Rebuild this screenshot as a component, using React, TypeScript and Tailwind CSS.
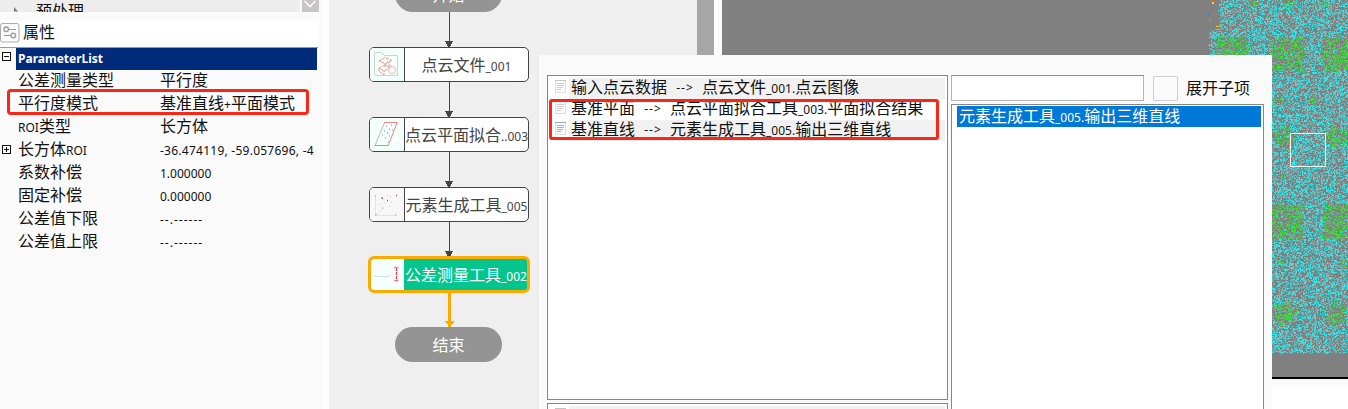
import React from "react";

/** Sets ideographs at the inherited size and every other run in a smaller Latin face. */
function Mixed({ text }: { text: string }) {
  const parts = text.split(/([\x20-\x7e]+)/);
  return (
    <>
      {parts.map((p, i) =>
        i % 2 === 1 ? (
          <span key={i} className="text-[12px]">
            {p}
          </span>
        ) : (
          p
        ),
      )}
    </>
  );
}

const properties = [
  { name: "公差测量类型", value: "平行度" },
  { name: "平行度模式", value: "基准直线+平面模式" },
  { name: "ROI类型", value: "长方体" },
  { name: "长方体ROI", value: "-36.474119, -59.057696, -4", group: true, spacing: "tracking-[0.25px]" },
  { name: "系数补偿", value: "1.000000" },
  { name: "固定补偿", value: "0.000000" },
  { name: "公差值下限", value: "--.------", spacing: "tracking-[1px]" },
  { name: "公差值上限", value: "--.------", spacing: "tracking-[1px]" },
];

function Toggle({ plus = false }: { plus?: boolean }) {
  return (
    <svg width="9" height="9" viewBox="0 0 9 9" shapeRendering="crispEdges" className="block">
      <rect x="0.5" y="0.5" width="8" height="8" fill="#fff" stroke="#111" />
      <path d={plus ? "M2 4.5h5M4.5 2v5" : "M2 4.5h5"} stroke="#111" />
    </svg>
  );
}

function PropertyPanel() {
  return (
    <div className="relative flex h-full w-[322px] shrink-0 flex-col bg-[#fafafa]">
      <div className="flex h-[12px] w-[319px] shrink-0 overflow-hidden">
        <div className="flex w-[300px] bg-[#ededed]">
          <svg width="36" height="12" className="block shrink-0">
            <path d="M14 7l4 4.500h-4z" fill="#777" />
          </svg>
          <span className="mt-[2px] leading-[18px]">预处理</span>
        </div>
        <div className="ml-[2px] w-[17px] bg-[#c8c5c6]">
          <svg width="17" height="12" className="block">
            <path d="M2.500 1l5.500 5.500L13.500 1" fill="none" stroke="#fff" strokeWidth="1.600" />
          </svg>
        </div>
      </div>
      <div className="mt-[8px] flex h-[27px] w-[319px] shrink-0 items-center bg-white">
        <svg width="20" height="20" viewBox="0 0 20 20" className="mt-[-1px] block" fill="none" stroke="#999">
          <rect x="0.500" y="0.500" width="18.500" height="18.500" rx="2" fill="#fbfbfb" stroke="#aaa" />
          <circle cx="6.200" cy="6.300" r="2.300" strokeWidth="1.300" />
          <circle cx="13.300" cy="12.500" r="2.300" strokeWidth="1.300" />
          <path d="M9 6.500h7M4 12.500h7" strokeWidth="1.200" />
        </svg>
        <span className="ml-[3px] mt-[-3px]">属性</span>
      </div>
      <div className="h-px w-[318px] shrink-0 bg-[#999]" />
      <div className="flex h-[22px] shrink-0">
        <div className="w-[16px] pl-[2px] pt-[4px]">
          <Toggle />
        </div>
        <div className="flex w-[301px] items-center bg-[#002a7a] pb-px pl-[2px] text-[12px] font-bold text-white">
          ParameterList
        </div>
      </div>
      {properties.map((p) => (
        <div key={p.name} className="flex h-[23px] shrink-0 items-start">
          <div className="w-[18px] pl-[2px] pt-[6px]">{p.group && <Toggle plus />}</div>
          <div className="h-[23px] w-[142px] whitespace-nowrap leading-[21px]">
            <Mixed text={p.name} />
          </div>
          <div className={p.spacing ? `h-[23px] w-[158px] whitespace-nowrap leading-[21px] ${p.spacing}` : "h-[23px] w-[158px] whitespace-nowrap leading-[21px]"}>
            <Mixed text={p.value} />
          </div>
        </div>
      ))}
      <div className="absolute left-[7px] top-[89px] h-[26px] w-[302px] rounded-[4px] border-[3px] border-[#fb2616]" />
    </div>
  );
}

function Arrow({ active = false }: { active?: boolean }) {
  return (
    <svg width="160" height="35" viewBox="0 0 160 35" className="block shrink-0" shapeRendering="crispEdges">
      {active ? (
        <>
          <rect x="79" y="0" width="3" height="35" fill="#fbab00" />
          <path d="M76 29h9v1l-3 3v1h-3v-1l-3-3z" fill="#fbab00" />
        </>
      ) : (
        <>
          <rect x="80" y="0" width="1" height="35" fill="#444" />
          <path d="M76 29h8v1h-1v2h-1v2h-1v1h-2v-1h-1v-2h-1v-2h-1z" fill="#444" />
        </>
      )}
    </svg>
  );
}

function FolderIcon() {
  return (
    <svg width="34" height="33" viewBox="0 0 34 33" fill="none">
      <path d="M4.500 26V4.500h7l3 3h13V27.500H5.500z" stroke="#ccd2d0" />
      <path d="M9 13l6-3.500 7 3-6 3.500zM15 16v3M9 20l6-3 5 2-6 4zM9 20v3l5 4v-4M17 13l4 6" stroke="#f08d8d" strokeDasharray="3 1" />
      <circle cx="22" cy="22" r="3.500" stroke="#f6b3b3" />
    </svg>
  );
}

function PlaneIcon() {
  return (
    <svg width="34" height="33" viewBox="0 0 34 33" fill="none">
      <path d="M14.500 4.500L5 27.500" stroke="#b9b9b9" />
      <path d="M14 4.500h13.500M18.500 27.500h-14M27 5l-8.500 22" stroke="#ef8181" />
      <path d="M16 8h1M21 7h1M14 13h1M19 11h1M17 15h1M12 17h1M15 20h1M19 18h1M22 12h1M18 24h1" stroke="#8b8b8b" />
    </svg>
  );
}

function ElementIcon() {
  return (
    <svg width="34" height="33" viewBox="0 0 34 33" fill="none">
      <path d="M5.500 8v19.500H26M6 27l8-7" stroke="#e4e4e4" />
      <path d="M5 8h1M25 27h1.500M5 27h1.500M12 20h1" stroke="#999" />
      <path d="M11.500 10h1.500M17 12.500h1M26 7.500h1" stroke="#e22f3b" strokeWidth="1.600" />
      <path d="M17 8h1M20 9h1M14 15h1M21 14h1M9 16h1M19 18h1" stroke="#f3b0b6" />
    </svg>
  );
}

function ToleranceIcon() {
  return (
    <svg width="33" height="32" viewBox="0 0 33 32" fill="none">
      <path d="M4 17.500h13l3-2M4 16v2" stroke="#dedede" />
      <path d="M23 8.500h4.500M23 21.500h4.500" stroke="#f08e98" strokeWidth="1.300" />
      <path d="M25.500 9v13" stroke="#e2414f" strokeWidth="1.300" strokeDasharray="3 1" />
    </svg>
  );
}

function Node({ icon, label, wide }: { icon: React.ReactNode; label: string; wide?: boolean }) {
  return (
    <div className="flex h-[35px] w-[160px] shrink-0 overflow-hidden rounded-[5px] border border-[#444] bg-white text-[#444]">
      <div className={wide ? "w-[35px] shrink-0 border-r border-[#444] bg-[#f7f7f7]" : "w-[35px] shrink-0 border-r border-[#444] bg-[#f3fffb]"}>{icon}</div>
      <div className="flex flex-1 justify-center whitespace-nowrap pt-[1px] leading-[33px]">
        <span>
          <Mixed text={label} />
        </span>
      </div>
    </div>
  );
}

function FlowGraph() {
  return (
    <div className="h-full w-[368px] shrink-0 overflow-hidden bg-[#efefef] pl-[40px]">
      <div className="mt-[-23px] flex w-[160px] flex-col items-center">
        <div className="mr-px flex h-[35px] w-[107px] shrink-0 items-center justify-center rounded-full bg-[#949494] text-white">开始</div>
        <Arrow />
        <Node icon={<FolderIcon />} label="点云文件_001" />
        <Arrow />
        <Node icon={<PlaneIcon />} label="点云平面拟合..003" />
        <Arrow />
        <Node icon={<ElementIcon />} label="元素生成工具_005" wide />
        <Arrow />
        <div className="my-[-1px] flex h-[37px] w-[162px] shrink-0 overflow-hidden rounded-[6px] border-[3px] border-[#fbab00] bg-[#03c58d] text-white">
          <div className="w-[33px] shrink-0 bg-[#f5fffc]">
            <ToleranceIcon />
          </div>
          <div className="whitespace-nowrap pl-px pt-px leading-[31px]">
            <Mixed text="公差测量工具_002" />
          </div>
        </div>
        <Arrow active />
        <div className="mr-px flex h-[35px] w-[107px] shrink-0 items-center justify-center rounded-full bg-[#949494] text-white">结束</div>
      </div>
    </div>
  );
}

/** [centre x, centre y, half width, half height, strength] of the raised pads. */
const pads = [
  [24, 50, 16, 13, 0.9], [79, 54, 17, 16, 0.9], [131, 54, 17, 16, 0.9],
  [45, 4, 6, 5, 0.5], [80, 4, 6, 5, 0.4], [114, 4, 6, 5, 0.4],
  [70, 100, 6, 5, 0.5], [104, 100, 6, 5, 0.5],
  [76, 137, 12, 11, 0.85], [128, 137, 12, 11, 0.85],
  [71, 176, 5, 5, 0.5], [137, 176, 5, 5, 0.5],
  [77, 221, 17, 17, 0.9], [131, 221, 16, 17, 0.9],
  [71, 262, 5, 5, 0.5], [137, 262, 5, 5, 0.5],
  [75, 313, 13, 12, 0.85], [127, 313, 12, 12, 0.85],
];

function buildCloud() {
  let seed = 90217;
  const rnd = () => {
    seed = (seed * 1664525 + 1013904223) >>> 0;
    return seed / 4294967296;
  };
  const colours = ["#2de9eb", "#50cccf", "#68adb0", "#2fe62f", "#4fcd53", "#5eb062"];
  const d = ["", "", "", "", "", ""];
  for (let y = 0; y < 353; y++) {
    let x = 64;
    if (y < 56) {
      x = y > 28 ? Math.floor(rnd() * 5) : 10 + Math.floor(rnd() * 3);
    }
    for (; x < 140; x++) {
      if (rnd() < 0.6) continue;
      const w = rnd() < 0.38 ? 2 : 1;
      const h = rnd() < 0.22 ? 2 : 1;
      let green = 0;
      for (const [cx, cy, rx, ry, s] of pads) {
        const u = Math.abs(x - cx) / rx;
        const v = Math.abs(y - cy) / ry;
        const large = rx > 15;
        const r = large ? Math.max(u, v) : Math.sqrt(u * u + v * v);
        const fade = large ? (1.12 - r) * 5 : (1.15 - r) * 2;
        green = Math.max(green, s * Math.min(1, Math.max(0, fade)));
      }
      const k = rnd();
      const tone = k < 0.34 ? 0 : k < 0.74 ? 1 : 2;
      const c = rnd() < green ? 3 + tone : tone;
      d[c] += `M${x} ${y}h${w}v${h}h-${w}z`;
      if (w === 2) x++;
    }
  }
  return colours.map((fill, i) => ({ fill, d: d[i] }));
}

const cloud = buildCloud();

function Viewer() {
  return (
    <div className="flex h-full w-[626px] shrink-0 flex-col bg-white">
      <div className="h-[377px] shrink-0 bg-[#808080]">
        <svg width="140" height="377" viewBox="0 0 140 377" className="ml-[486px] block" shapeRendering="crispEdges">
          {cloud.map((c) => (
            <path key={c.fill} d={c.d} fill={c.fill} />
          ))}
          <path d="M3 0h2v2h-2zM9 20h1v3h-1zM10 23h1v3h-1z" fill="#f05a28" />
          <path d="M4 2h2v2h-2zM8 26h3v1h-3z" fill="#dfe030" />
          <path d="M0 13h2v2h-2z" fill="#4a78e0" />
          <path d="M1 19h2v1h-2z" fill="#35dd35" />
          <rect x="82.500" y="133.500" width="35" height="33" fill="none" stroke="#f5f5f5" />
        </svg>
      </div>
      <div className="h-[2px] shrink-0 bg-black" />
      <div className="h-[8px] shrink-0 bg-[#fafafa]" />
    </div>
  );
}

const links = [
  { from: "输入点云数据", to: "点云文件_001.点云图像" },
  { from: "基准平面", to: "点云平面拟合工具_003.平面拟合结果" },
  { from: "基准直线", to: "元素生成工具_005.输出三维直线", current: true },
];

function DocIcon({ active = false }: { active?: boolean }) {
  return (
    <svg width="12" height="14" viewBox="0 0 12 14" className="block shrink-0" shapeRendering="crispEdges">
      <rect x="0.500" y="0.500" width="10" height="12" fill="#fbfbfb" stroke="#dedede" />
      <path d="M0 .500h11" stroke={active ? "#8dafcf" : "#c4c4c4"} />
      <path d="M2 3.500h7M2 5.500h7M2 7.500h6M2 9.500h4" stroke={active ? "#91b7dc" : "#cfcfcf"} />
    </svg>
  );
}

function LinkDialog() {
  return (
    <div className="absolute left-[539px] top-[55px] flex h-[354px] w-[733px] gap-[3px] overflow-hidden bg-[#fafafa] pl-[8px] pt-[20px]">
      <div className="flex w-[401px] shrink-0 flex-col">
        <div className="h-[325px] shrink-0 border border-[#828790] bg-white pl-[7px] pt-[2px]">
          {links.map((l, i) => (
            <div key={l.from} className="flex h-[21px] w-[390px]">
              <div className="w-[14px] pt-[2px]">
                <DocIcon active={l.current} />
              </div>
              <div className={i % 2 === 0 ? "flex flex-1 items-center whitespace-nowrap bg-[#f1f1f1] pb-[2px] pl-[2px] leading-[19px]" : "flex flex-1 items-center whitespace-nowrap pb-[2px] pl-[2px] leading-[19px]"}>
                <span>{l.from}</span>
                <span className="w-[35px] pl-px text-center text-[12px] tracking-[1px]">--&gt;</span>
                <span>
                  <Mixed text={l.to} />
                </span>
              </div>
            </div>
          ))}
        </div>
        <div className="mt-[3px] h-[60px] shrink-0 border border-[#828790] bg-white pl-[7px] pt-[2px]">
          <div className="flex h-[21px] w-[390px]">
            <div className="w-[14px] pt-[2px]">
              <DocIcon />
            </div>
            <div className="flex-1 bg-[#f1f1f1] pl-[18px] leading-[22px]">点云</div>
          </div>
        </div>
      </div>
      <div className="flex w-[313px] shrink-0 flex-col">
        <div className="flex h-[26px] shrink-0 items-center">
          <div className="h-[26px] w-[193px] border border-[#b5b5b5] border-t-[#8f8f8f] bg-white" />
          <div className="ml-[9px] mt-px h-[25px] w-[25px] rounded-[2px] border border-[#cfcfcf] bg-[#fbfbfb]" />
          <span className="mb-px ml-[8px]">展开子项</span>
        </div>
        <div className="mt-[3px] h-[330px] shrink-0 border border-[#828790] bg-white pl-[5px] pr-[2px] pt-px">
          <div className="h-[21px] whitespace-nowrap bg-[#0078d7] pl-[2px] leading-[21px] text-white">
            <Mixed text="元素生成工具_005.输出三维直线" />
          </div>
        </div>
      </div>
      <div className="absolute left-[10px] top-[44px] h-[41px] w-[390px] rounded-[3px] border-[3px] border-[#fb2616]" />
    </div>
  );
}

export default function App() {
  return (
    <div className="relative flex h-[409px] w-[1348px] overflow-hidden bg-white font-['Noto_Sans','Noto_Sans_CJK_SC',sans-serif] text-[16px] text-[#111]">
      <PropertyPanel />
      <div className="w-[7px] shrink-0 bg-[#fefefe]" />
      <FlowGraph />
      <div className="w-[17px] shrink-0 bg-[#a6a6a6]" />
      <div className="w-[3px] shrink-0 bg-white" />
      <div className="w-[5px] shrink-0 bg-[#fafafa]" />
      <Viewer />
      <LinkDialog />
    </div>
  );
}
